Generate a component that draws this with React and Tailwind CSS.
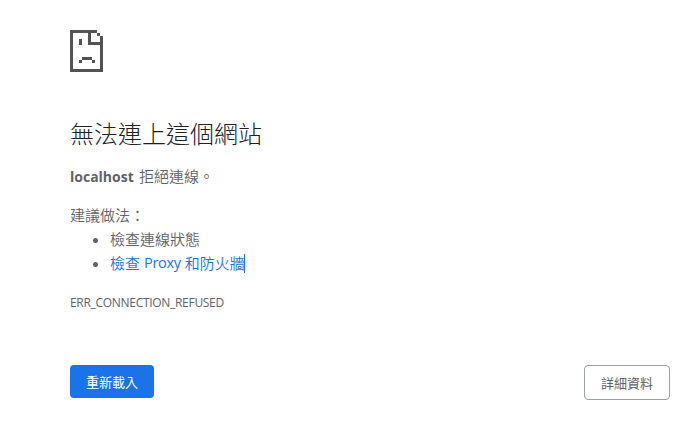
function SadPage() {
  return (
    <svg className="block h-[42px] w-[33px]" viewBox="0 0 33 42" fill="#535353" shapeRendering="crispEdges" aria-hidden="true">
      <path d="M0 0H27V3H21V12H33V15H18V3H3V39H30V15H33V42H0ZM27 3H30V6H27ZM30 6H33V15H30ZM9 9H12V15H9ZM12 27H22V30H12ZM9 30H12V33H9ZM22 30H25V33H22Z" />
    </svg>
  );
}

export default function App() {
  return (
    <main className="h-[425px] w-[695px] overflow-hidden bg-white pt-[30px] pr-[25px] pl-[70px] font-['Open_Sans','Noto_Sans_CJK_TC',sans-serif] text-[15px] leading-6 text-[#5f6368]">
      <SadPage />
      <h1 className="mt-[46px] h-8 text-[24px] leading-8 font-light whitespace-nowrap text-[#202124]">無法連上這個網站</h1>
      <p className="mt-[14px] h-6 font-[350] whitespace-nowrap">
        <strong className="inline-block w-[69px] text-[14px] font-bold">localhost</strong>拒絕連線。
      </p>
      <div className="mt-[15px] font-[350]">
        <p className="h-6">建議做法：</p>
        <ul className="list-disc pl-10">
          <li className="h-6">檢查連線狀態</li>
          <li className="h-6">
            <a className="inline-flex h-6 items-center whitespace-nowrap text-[#1a73e8]">
              檢查&nbsp;<span className="text-[14.5px] font-normal tracking-[-0.25px]">Proxy</span>&nbsp;和防火牆
              <span className="-ml-px h-[19px] w-px bg-[#1a73e8]" />
            </a>
          </li>
        </ul>
      </div>
      <p className="mt-4 h-6 text-[12px] tracking-[-0.3px]">ERR_CONNECTION_REFUSED</p>
      <div className="mt-[50px] flex items-start justify-between text-[13px]">
        <button className="h-[33px] w-[84px] rounded-[4px] bg-[#1a73e8] text-white">重新載入</button>
        <button className="h-[35px] w-[86px] rounded-[4px] border border-[#9aa0a6] text-[#5f6368]">詳細資料</button>
      </div>
    </main>
  );
}
